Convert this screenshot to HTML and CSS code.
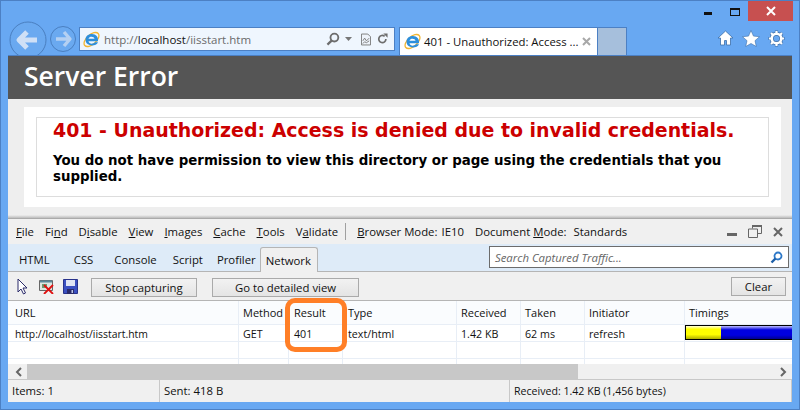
FILE: index.html
```html
<!DOCTYPE html>
<html lang="en">
<head>
<meta charset="utf-8">
<title>401 - Unauthorized</title>
<link rel="stylesheet" href="styles.css">
</head>
<body>
<div class="window">
  <header class="chrome">
    <div class="captions">
      <span class="cap-min"></span>
      <span class="cap-max"></span>
      <span class="cap-close"><svg width="10" height="10" viewBox="0 0 10 10"><path d="M1 1l8 8M9 1l-8 8" stroke="#fff" stroke-width="2"/></svg></span>
    </div>
    <div class="navrow">
      <svg class="nav-back" width="38" height="38" viewBox="0 0 38 38"><circle cx="19" cy="19" r="18" fill="#6aa9f0" stroke="#4a7fc0"/><path d="M10 19h18M18 11l-8 8 8 8" fill="none" stroke="#cfe0f6" stroke-width="5" stroke-linejoin="round"/></svg>
      <svg class="nav-fwd" width="26" height="26" viewBox="0 0 26 26"><circle cx="13" cy="13" r="12.5" fill="#6aa9f0" stroke="#4a7fc0"/><path d="M20 13H6M14 6l6 7-6 7" fill="none" stroke="#b4d0f2" stroke-width="3.4" stroke-linejoin="round"/></svg>
      <div class="address">
        <svg class="ie" width="17" height="17" viewBox="0 0 17 17"><use href="#ie-logo"/></svg>
        <span class="url">http://<b>localhost</b>/iisstart.htm</span>
        <svg class="addr-icon" width="14" height="14" viewBox="0 0 15 15"><circle cx="9" cy="6" r="4.2" fill="none" stroke="#6d6d6d" stroke-width="2"/><path d="M6 9.200L1.500 13.500" stroke="#6d6d6d" stroke-width="2.400"/></svg>
        <svg class="addr-drop" width="7" height="4" viewBox="0 0 7 4"><path d="M0 0h7L3.500 4z" fill="#777"/></svg>
        <svg class="addr-page" width="10" height="13" viewBox="0 0 11 13"><path d="M.500.500h7l3 3v9H.5z" fill="#eef3fa" stroke="#777"/><path d="M2 8l2-3 2 3 3-3M2 11l2-2 2 1 3-2" fill="none" stroke="#777"/></svg>
        <svg class="addr-refresh" width="11" height="12" viewBox="0 0 13 13"><path d="M10.500 6.500a4.200 4.200 0 1 1-1.500-3.200" fill="none" stroke="#6d6d6d" stroke-width="2"/><path d="M7.500 0h5v5z" fill="#6d6d6d"/></svg>
      </div>
      <div class="tab-active">
        <svg class="ie" width="17" height="17" viewBox="0 0 17 17">
          <defs>
            <g id="ie-logo">
              <ellipse cx="8.500" cy="8.500" rx="9" ry="4.800" transform="rotate(-42 8.500 8.500)" fill="none" stroke="#f2b632" stroke-width="1.300"/>
              <path d="M15 10.200H5.500c.3 2.800 4.500 3.300 6.500 1h3c-2 4.800-12.500 4.500-12.500-2.700C2.500 4.500 6 3 9 3c4 0 6.500 3 6 7.200zM5.500 7.800h6C11.300 5.200 6 5 5.500 7.800z" fill="#2d8fdc" fill-rule="evenodd"/>
            </g>
          </defs>
          <use href="#ie-logo"/>
        </svg>
        <span class="tab-title">401 - Unauthorized: Access ...</span>
        <svg class="tab-x" width="9" height="9" viewBox="0 0 9 9"><path d="M1 1l7 7M8 1L1 8" stroke="#a8a8a8" stroke-width="2"/></svg>
      </div>
      <div class="tab-new"></div>
      <div class="tools">
        <svg width="17" height="16" viewBox="0 0 17 16"><path d="M8.500 1L1 8h2.500v7h4v-4.500h2V15h4V8H16z" fill="#fff" stroke="#3c6ea8" stroke-width=".8"/></svg>
        <svg width="18" height="17" viewBox="0 0 18 17"><path d="M9 .5l2.500 5.600 6 .6-4.500 4 1.300 5.800L9 13.500l-5.300 3L5 10.700.5 6.700l6-.6z" fill="#fff" stroke="#3c6ea8" stroke-width=".6"/></svg>
        <svg width="17" height="17" viewBox="0 0 17 17"><circle cx="8.500" cy="8.500" r="4.800" fill="none" stroke="#3c6ea8" stroke-width="4"/><path d="M8.500 .5v3M8.500 13.500v3M.5 8.500h3M13.500 8.500h3M2.800 2.800L5 5M12 12l2.200 2.200M14.200 2.800L12 5M5 12l-2.200 2.200" stroke="#3c6ea8" stroke-width="3.200"/><circle cx="8.500" cy="8.500" r="4.800" fill="none" stroke="#fff" stroke-width="2.600"/><path d="M8.500 1v3M8.500 13v3M1 8.500h3M13 8.500h3M3 3l2 2M12 12l2 2M14 3l-2 2M5 12l-2 2" stroke="#fff" stroke-width="2.200"/></svg>
      </div>
    </div>
  </header>

  <main class="page">
    <div class="server-bar"><h1>Server Error</h1></div>
    <section class="content-wrap">
      <div class="content">
        <div class="fieldset">
          <h2>401 - Unauthorized: Access is denied due to invalid credentials.</h2>
          <h3>You do not have permission to view this directory or page using the credentials that you supplied.</h3>
        </div>
      </div>
    </section>

    <section class="devtools">
      <nav class="menubar">
        <span><u>F</u>ile</span><span>Fi<u>n</u>d</span><span>D<u>i</u>sable</span><span><u>V</u>iew</span><span><u>I</u>mages</span><span><u>C</u>ache</span><span><u>T</u>ools</span><span>V<u>a</u>lidate</span>
        <i class="menu-sep"></i>
        <span><u>B</u>rowser Mode:<span class="mode-val">IE10</span></span><span>Document <u>M</u>ode:<span class="mode-val mode-doc">Standards</span></span>
        <div class="dt-win">
          <i class="dt-min"></i>
          <svg width="14" height="13" viewBox="0 0 14 13"><path d="M4.500 3.500v-3h9v8h-4M.5 4h9v8.500h-9z" fill="none" stroke="#666"/><path d="M4 1h10" stroke="#666" stroke-width="2"/></svg>
          <svg width="10" height="10" viewBox="0 0 10 10"><path d="M1 1l8 8M9 1l-8 8" stroke="#666" stroke-width="2"/></svg>
        </div>
      </nav>
      <div class="tabstrip">
        <span class="dt-tab t-html">HTML</span><span class="dt-tab t-css">CSS</span><span class="dt-tab t-console">Console</span><span class="dt-tab t-script">Script</span><span class="dt-tab t-profiler">Profiler</span><span class="dt-tab on">Network</span>
        <div class="search">
          <em>Search Captured Traffic...</em>
          <svg width="13" height="13" viewBox="0 0 13 13"><circle cx="8" cy="5" r="3.500" fill="none" stroke="#2d78c8" stroke-width="1.800"/><path d="M5.500 7.500L1.500 11.500" stroke="#1d5fa8" stroke-width="2.400"/></svg>
        </div>
      </div>
      <div class="toolbar">
        <svg class="tb-icon i-arrow" width="12" height="17" viewBox="0 0 12 17"><path d="M1 1v13l3-3 2.500 5 2-1-2.500-5h4z" fill="#fff" stroke="#2a2a6a"/></svg>
        <svg class="tb-icon i-clear" width="16" height="15" viewBox="0 0 16 15"><path d="M.500 1.500h13v10H.5z" fill="#dde6e0" stroke="#666"/><path d="M1 1.500h12v2H1z" fill="#5a8a9a"/><path d="M3 5h5v4H3z" fill="#6a9a70"/><path d="M5 6l9 9M14 6l-9 9" stroke="#e01010" stroke-width="1.800"/></svg>
        <svg class="tb-icon i-save" width="15" height="15" viewBox="0 0 15 15"><path d="M.500.500h14v14h-14z" fill="#3a4fc0" stroke="#28328a"/><path d="M3 1h9v6H3z" fill="#dfe4f4"/><path d="M4 10h7v5H4z" fill="#2a2a6a"/><path d="M8.500 11h1.500v3H8.500z" fill="#bcc6ea"/></svg>
        <button class="btn b-stop">Stop capturing</button>
        <button class="btn b-detail">Go to detailed view</button>
        <button class="btn b-clear">Clear</button>
      </div>
      <div class="table">
        <div class="row head">
          <span class="c-url">URL</span><span class="c-method">Method</span><span class="c-result">Result</span><span class="c-type">Type</span><span class="c-recv">Received</span><span class="c-taken">Taken</span><span class="c-init">Initiator</span><span class="c-time">Timings</span>
        </div>
        <div class="row data">
          <span class="c-url">http://localhost/iisstart.htm</span><span class="c-method">GET</span><span class="c-result">401</span><span class="c-type">text/html</span><span class="c-recv">1.42 KB</span><span class="c-taken">62 ms</span><span class="c-init">refresh</span><span class="c-time"><i class="timing"><i class="t-wait"></i><i class="t-recv"></i></i></span>
        </div>
        <div class="row empty">
          <span class="c-url"></span><span class="c-method"></span><span class="c-result"></span><span class="c-type"></span><span class="c-recv"></span><span class="c-taken"></span><span class="c-init"></span><span class="c-time"></span>
        </div>
        <div class="row stub">
          <span class="c-url"></span><span class="c-method"></span><span class="c-result"></span><span class="c-type"></span><span class="c-recv"></span><span class="c-taken"></span><span class="c-init"></span><span class="c-time"></span>
        </div>
        <div class="highlight"></div>
      </div>
      <div class="scrollbar">
        <svg width="7" height="10" viewBox="0 0 7 10"><path d="M6 1L2 5l4 4" fill="none" stroke="#666" stroke-width="2"/></svg>
        <div class="track"><div class="thumb"></div></div>
        <svg width="7" height="10" viewBox="0 0 7 10"><path d="M1 1l4 4-4 4" fill="none" stroke="#666" stroke-width="2"/></svg>
      </div>
      <footer class="status">
        <span class="s-items">Items: 1</span><span class="s-sent">Sent: 418 B</span><span class="s-recv">Received: 1.42 KB (1,456 bytes)</span>
      </footer>
    </section>
  </main>
</div>
</body>
</html>
```
FILE: styles.css
```css
* { box-sizing: border-box; }
html, body { margin: 0; padding: 0; }
body { width: 800px; height: 410px; overflow: hidden; font-family: "Open Sans", "Noto Sans", sans-serif; }
.window { width: 800px; height: 410px; background: #68a8f2; border: 1px solid #4c80c4; padding: 0 7px 7px; display: flex; flex-direction: column; overflow: hidden; }

.chrome { height: 54px; flex: none; display: flex; flex-direction: column; }
.captions { height: 20px; display: flex; justify-content: flex-end; margin-right: -1px; flex: none; }
.cap-min { width: 8px; height: 3px; background: #111; margin: 11px 18px 0 0; }
.cap-max { width: 10px; height: 8px; border: 1px solid #111; border-top-width: 2px; margin: 7px 8px 0 0; }
.cap-close { width: 45px; height: 20px; background: #c75050; display: flex; align-items: center; justify-content: center; }
.navrow { display: flex; align-items: flex-start; height: 34px; }
.nav-back { flex: none; margin-left: 1px; }
.nav-fwd { margin: 5px 0 0 3px; flex: none; }
.address { margin: 6px 0 0 3px; width: 316px; height: 24px; background: #eff6fe; border: 1px solid #4c80c4; display: flex; align-items: center; padding: 0 6px 0 3px; flex: none; }
.ie { flex: none; }
.url { font-size: 11.5px; color: #6a6a6a; margin-left: 4px; flex: 1; white-space: nowrap; }
.url b { font-weight: 400; color: #111; }
.addr-icon { margin-right: 5px; flex: none; }
.addr-drop { margin-right: 9px; flex: none; }
.addr-page { margin-right: 6px; flex: none; }
.addr-refresh { flex: none; }
.tab-active { margin: 6px 0 0 4px; width: 199px; height: 28px; background: #fff; border: 1px solid #4c80c4; border-bottom: 0; display: flex; align-items: center; padding: 0 6px 0 4px; flex: none; }
.tab-title { font-size: 11.35px; color: #111; margin-left: 3px; flex: 1; white-space: nowrap; }
.tab-x { flex: none; }
.tab-new { margin-top: 6px; width: 29px; height: 28px; background: #a6bfdc; border: 1px solid #4c80c4; border-left: 0; border-bottom: 0; flex: none; }
.tools { margin: 9px 7px 0 auto; display: flex; gap: 8px; }

.page { flex: 1; min-height: 0; background: #eee; border-top: 1px solid #4c80c4; display: flex; flex-direction: column; position: relative; }
.server-bar { height: 43px; background: #555; padding-left: 16px; flex: none; }
.server-bar h1 { margin: 0; font: 600 26.5px/41px "Open Sans", sans-serif; color: #fff; }
.content-wrap { flex: none; height: 120px; padding: 8px 11px 0 16px; background: linear-gradient(#eee calc(100% - 4px), #bbb calc(100% - 1px), #999 100%); }
.content { background: #fff; height: 100px; padding: 10px 12px; }
.fieldset { border: 1px solid #ddd; height: 80px; padding: 0 16px; }
.fieldset h2 { margin: 0; font: 700 18.95px/24px "DejaVu Sans", Verdana, sans-serif; color: #c00; white-space: nowrap; }
.fieldset h3 { margin: 11px 0 0; font: 700 13.35px/16px "DejaVu Sans", Verdana, sans-serif; color: #000; }

.devtools { flex: 1; min-height: 0; background: #f0f0f0; display: flex; flex-direction: column; font-size: 11.35px; color: #111; }
.menubar { height: 25px; display: flex; align-items: center; gap: 11px; padding-left: 8px; flex: none; white-space: nowrap; }
.mode-val { margin-left: 4px; }
.mode-doc { margin-left: 7px; }
.menu-sep { width: 1px; height: 17px; background: #a0a0a0; margin-left: -4px; }
.dt-win { margin-left: auto; display: flex; align-items: center; gap: 11px; margin-right: 9px; }
.dt-min { width: 10px; height: 3px; background: #666; margin-top: 6px; }
.tabstrip { height: 28px; background: #deebf8; border-bottom: 1px solid #b5b5b5; display: flex; align-items: flex-end; flex: none; }
.dt-tab { height: 24px; line-height: 26px; white-space: nowrap; }
.t-html { padding: 0 11px 0 11px; }
.t-css { padding: 0 13px 0 13px; }
.t-console { padding: 0 8px 0 8px; }
.t-script { padding: 0 6px 0 8px; }
.t-profiler { padding: 0 4px 0 8px; }
.dt-tab.on { background: #f0f0f0; border: 1px solid #b5b5b5; border-bottom: 0; border-radius: 3px 3px 0 0; height: 25px; margin-bottom: -1px; width: 58px; padding: 0 0 0 5px; line-height: 25px; }
.search { margin: 0 3px 3px auto; width: 300px; height: 22px; background: #fff; border: 1px solid #6c6c6c; display: flex; align-items: center; justify-content: space-between; padding: 0 5px; color: #666; }
.search em { font-style: italic; }
.toolbar { height: 29px; display: flex; align-items: center; padding-left: 9px; flex: none; border-bottom: 1px solid #b5b5b5; }
.tb-icon { flex: none; }
.i-clear { margin-left: 10px; }
.i-save { margin-left: 8px; }
.btn { height: 19px; font: 11.35px/15px "Open Sans", sans-serif; color: #111; background: linear-gradient(#f2f2f2, #e4e4e4); border: 1px solid #aaa; padding: 0; }
.b-stop { width: 106px; margin: 2px 0 0 13px; }
.b-detail { width: 147px; margin: 2px 0 0 15px; }
.b-clear { width: 55px; margin-left: auto; margin-right: 6px; }

.table { background: #fff; flex: none; height: 63px; position: relative; }
.row { display: flex; border-bottom: 1px solid #e8eef6; white-space: nowrap; }
.row span { border-right: 1px solid #e8eef6; padding-left: 4px; display: block; flex: none; }
.head { height: 24px; line-height: 24px; background: #fafcfe; font-size: 11px; }
.data, .empty { height: 17px; line-height: 18px; }
.data { font-size: 10.7px; }
.stub { height: 5px; border-bottom: 0; }
.row .c-url { width: 231px; padding-left: 7px; }
.data .c-url { font-size: 10.4px; }
.c-method { width: 50px; }
.row .c-result { width: 54px; padding-left: 5px; }
.row .c-type { width: 114px; padding-left: 5px; }
.c-recv { width: 64px; }
.c-taken { width: 64px; }
.c-init { width: 100px; }
.row .c-time { width: 107px; border-right: 0; }
.data .c-time { padding-left: 0; }
.timing { display: flex; height: 15px; border: 1px solid #000; border-right: 0; }
.timing i { display: block; }
.t-wait { width: 35px; background: linear-gradient(#ffffe0 0, #ffff00 25%, #ffff00 65%, #b0b000 100%); }
.t-recv { flex: 1; background: linear-gradient(#c0c0ff 0, #0000e0 30%, #0000e0 70%, #000090 100%); }
.highlight { position: absolute; left: 277px; top: -3px; width: 62px; height: 54px; border: 5px solid #ff7f27; border-radius: 10px; }

.scrollbar { height: 16px; display: flex; align-items: center; flex: none; border-bottom: 1px solid #c8c8c8; padding: 0 5px 0 7px; gap: 5px; }
.track { flex: 1; height: 15px; }
.thumb { width: 551px; height: 100%; background: #c8c8c8; }
.status { flex: 1; display: flex; align-items: center; min-height: 0; white-space: nowrap; }
.status span { display: block; height: 100%; line-height: 22px; border-right: 1px solid #c8c8c8; }
.s-items { width: 152px; padding-left: 4px; }
.s-sent { width: 350px; padding-left: 4px; }
.s-recv { flex: 1; padding-left: 4px; font-size: 10.6px; }
```
